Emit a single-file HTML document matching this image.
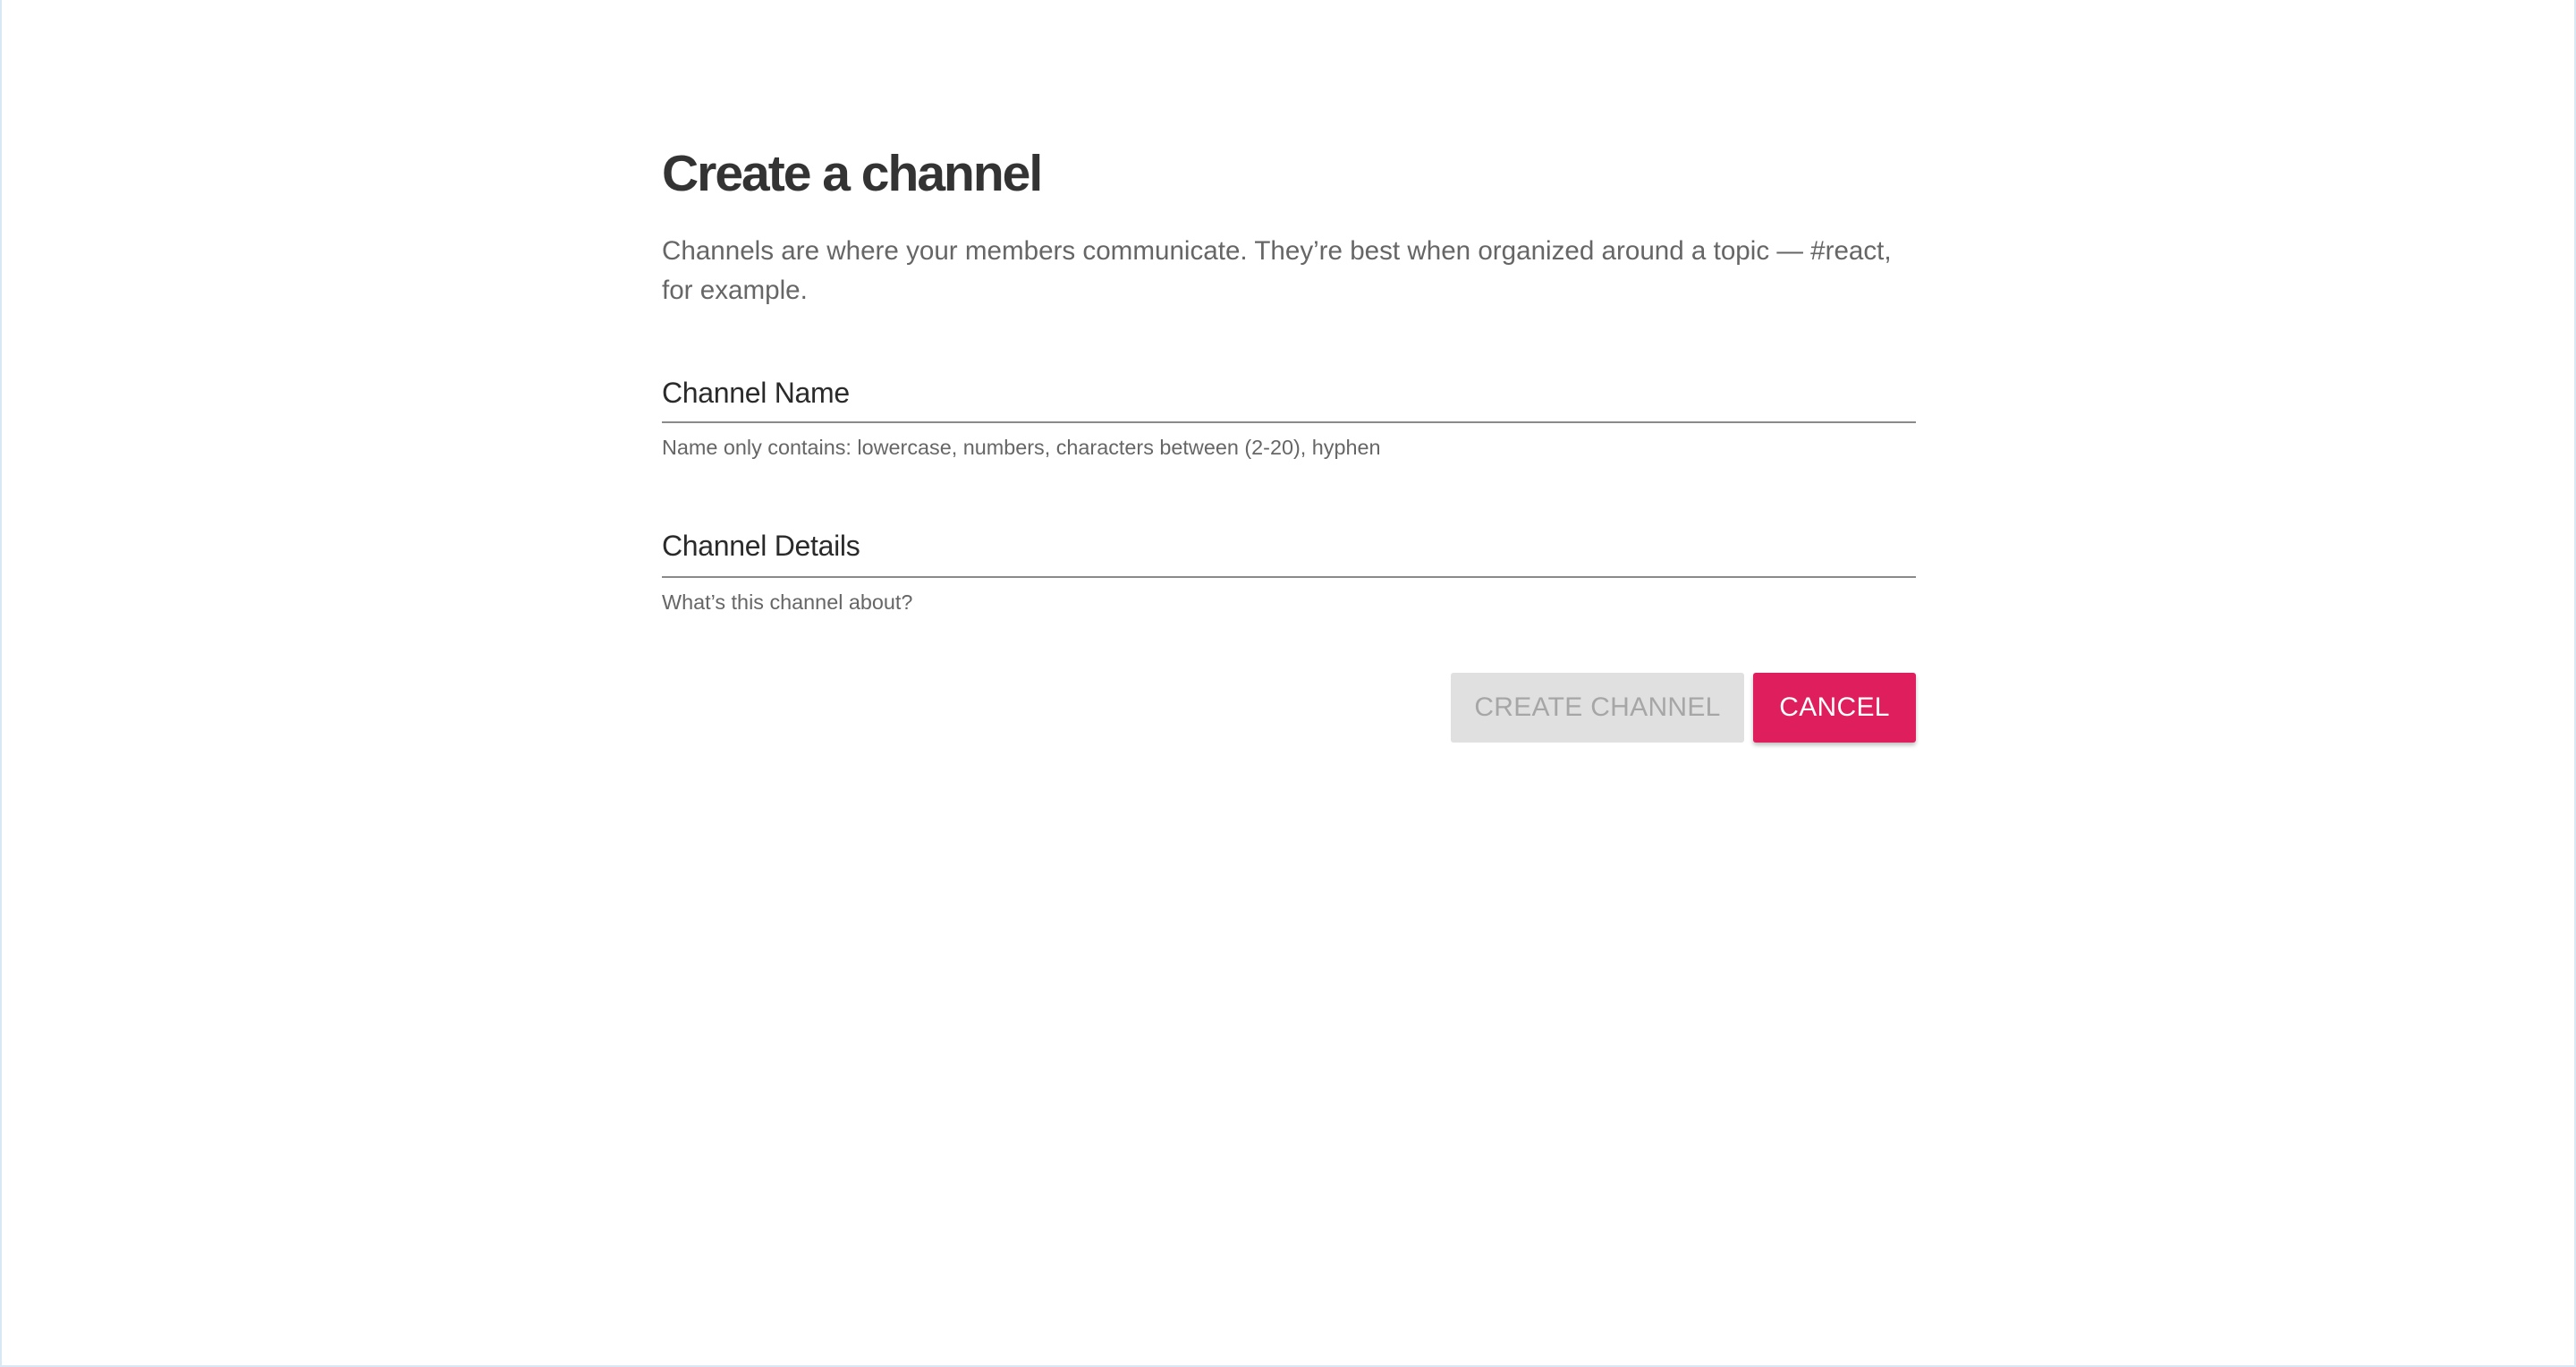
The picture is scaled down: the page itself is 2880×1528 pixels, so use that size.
<!DOCTYPE html>
<html><head><meta charset="utf-8"><style>
html,body{margin:0;padding:0;width:2880px;height:1528px;background:#fff;overflow:hidden;font-family:"Liberation Sans",Roboto,sans-serif;}
body{box-sizing:border-box;border-left:2px solid #d8e8f4;border-right:2px solid #d8e8f4;border-bottom:2px solid #d8e8f4;position:relative}
.a{position:absolute;left:738px;white-space:nowrap}
h1{margin:0;font-size:57px;font-weight:bold;color:#333;letter-spacing:-2px}
.p{font-size:29.6px;color:#666;line-height:44px}
.lab{font-size:32px;color:#2a2a2a;letter-spacing:-0.3px}
.line{position:absolute;left:738px;width:1402px;height:2px;background:#8a8a8a}
.help{font-size:23.4px;color:#666}
.btn{position:absolute;top:752px;height:78px;display:flex;align-items:center;justify-content:center;font-size:30px;letter-spacing:0.3px;border-radius:3px}
</style></head><body>
<h1 class="a" style="top:161px">Create a channel</h1>
<div class="a p" style="top:259px">Channels are where your members communicate. They’re best when organized around a topic — #react,<br>for example.</div>
<div class="a lab" style="top:421px">Channel Name</div>
<div class="line" style="top:471px"></div>
<div class="a help" style="top:487px">Name only contains: lowercase, numbers, characters between (2-20), hyphen</div>
<div class="a lab" style="top:592px">Channel Details</div>
<div class="line" style="top:644px"></div>
<div class="a help" style="top:660px">What’s this channel about?</div>
<div class="btn" style="left:1620px;width:328px;background:#e0e0e0;color:#a6a6a6">CREATE CHANNEL</div>
<div class="btn" style="left:1958px;width:182px;background:#df1f5d;color:#fff;box-shadow:0 3px 5px rgba(0,0,0,0.25)">CANCEL</div>
</body></html>
